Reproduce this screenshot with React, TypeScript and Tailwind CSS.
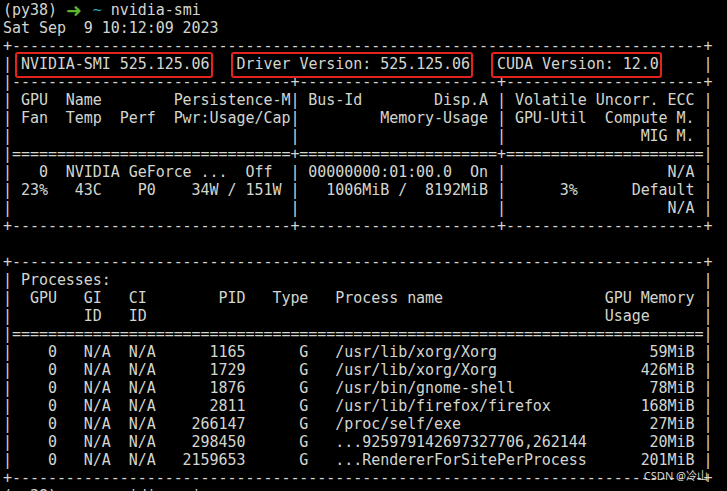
const dash = (n: number) => "-".repeat(n);
const eq = (n: number) => "=".repeat(n);

function Boxed({ children }: { children: string }) {
  return (
    <span className="relative">
      {children}
      <span className="pointer-events-none absolute -left-[6px] -right-[3px] -top-[3px] -bottom-[5px] rounded-[3px] border-2 border-[#e4241c]" />
    </span>
  );
}

function Prompt() {
  return (
    <div className="h-[18px]">
      (py38){" "}
      <span className="inline-block h-[18px] w-[9px] align-top font-['DejaVu_Sans',sans-serif] text-[19px] font-bold leading-[18px] text-[#5cb531]">
        ➜
      </span>
      {"  "}
      <span className="text-[#36a4b6]">~</span> nvidia-smi
    </div>
  );
}

const gpuLines = [
  `|${dash(31)}+${dash(22)}+${dash(22)}+`,
  "| GPU  Name        Persistence-M| Bus-Id        Disp.A | Volatile Uncorr. ECC |",
  "| Fan  Temp  Perf  Pwr:Usage/Cap|         Memory-Usage | GPU-Util  Compute M. |",
  "|                               |                      |               MIG M. |",
  `|${eq(31)}+${eq(22)}+${eq(22)}|`,
  "|   0  NVIDIA GeForce ...  Off  | 00000000:01:00.0  On |                  N/A |",
  "| 23%   43C    P0    34W / 151W |   1006MiB /  8192MiB |      3%      Default |",
  "|                               |                      |                  N/A |",
  `+${dash(31)}+${dash(22)}+${dash(22)}+`,
  " ",
  `+${dash(77)}+`,
  "| Processes:                                                                  |",
  "|  GPU   GI   CI        PID   Type   Process name                  GPU Memory |",
  "|        ID   ID                                                   Usage      |",
  `|${eq(77)}|`,
  "|    0   N/A  N/A      1165      G   /usr/lib/xorg/Xorg                 59MiB |",
  "|    0   N/A  N/A      1729      G   /usr/lib/xorg/Xorg                426MiB |",
  "|    0   N/A  N/A      1876      G   /usr/bin/gnome-shell               78MiB |",
  "|    0   N/A  N/A      2811      G   /usr/lib/firefox/firefox          168MiB |",
  "|    0   N/A  N/A    266147      G   /proc/self/exe                     27MiB |",
  "|    0   N/A  N/A    298450      G   ...925979142697327706,262144       20MiB |",
  "|    0   N/A  N/A   2159653      G   ...RendererForSitePerProcess      201MiB |",
  `+${dash(77)}+`,
];

export default function App() {
  return (
    <div className="relative h-[491px] w-[727px] overflow-hidden bg-black">
      <div className="whitespace-pre px-[3px] pt-px font-['DejaVu_Sans_Mono',monospace] text-[15px] leading-[18px] tracking-[-0.05px] text-[#d3d5cf]">
        <Prompt />
        <div>Sat Sep  9 10:12:09 2023</div>
        <div>{`+${dash(77)}+`}</div>
        <div>
          {"| "}
          <Boxed>NVIDIA-SMI 525.125.06</Boxed>
          {"   "}
          <Boxed>Driver Version: 525.125.06</Boxed>
          {"   "}
          <Boxed>CUDA Version: 12.0</Boxed>
          {"     |"}
        </div>
        {gpuLines.map((line, i) => (
          <div key={i}>{line}</div>
        ))}
        <Prompt />
      </div>
      <span className="absolute right-[19px] top-[467px] font-['Noto_Sans','Noto_Sans_CJK_SC',sans-serif] text-[11px] leading-[18px] text-[#d8d8d8]">
        CSDN @冷山
      </span>
    </div>
  );
}
